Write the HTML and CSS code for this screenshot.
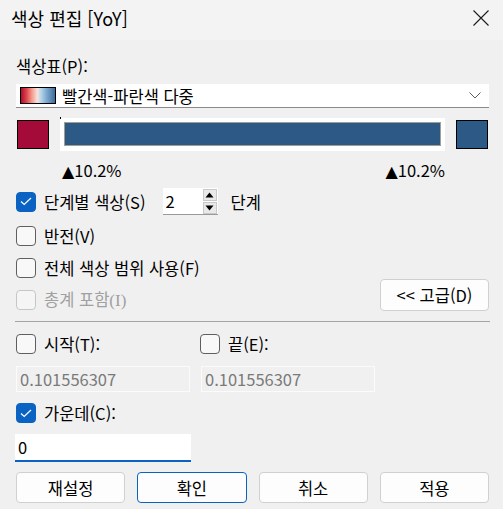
FILE: index.html
```html
<!DOCTYPE html>
<html lang="ko">
<head>
<meta charset="utf-8">
<link rel="stylesheet" href="styles.css">
</head>
<body>
<div class="titlebar">
  <span class="title">색상 편집 [YoY]</span>
  <svg class="close" width="16" height="16" viewBox="0 0 16 16"><path d="M0.5 0.5 L15.5 15.5 M15.5 0.5 L0.5 15.5" stroke="#1a1a1a" stroke-width="1.1" fill="none"/></svg>
</div>
<div class="content">
  <div class="label-row">색상표(P):</div>
  <div class="combo">
    <span class="swatch"></span>
    <span class="combo-text">빨간색-파란색 다중</span>
    <svg class="chev" width="12" height="7" viewBox="0 0 12 7"><path d="M0.5 0.5 L6 6 L11.5 0.5" stroke="#5c5c5c" stroke-width="1" fill="none"/></svg>
  </div>
  <div class="color-row">
    <span class="sq red"></span>
    <div class="bar-outer"><div class="bar-inner"></div></div>
    <span class="sq blue"></span>
  </div>
  <div class="pct-row"><span><span class="tri">▲</span>10.2%</span><span><span class="tri">▲</span>10.2%</span></div>
  <div class="steps-row">
    <span class="cb checked"><svg width="12" height="9" viewBox="0 0 12 9"><path d="M1 4.5 L4.2 7.5 L11 1" stroke="#fff" stroke-width="1.2" fill="none"/></svg></span>
    <span class="cb-label">단계별 색상(S)</span>
    <div class="spinner">
      <span class="spin-val">2</span>
      <div class="spin-btns">
        <span class="spin-btn"><svg width="9" height="6" viewBox="0 0 9 6"><path d="M4.5 0.5 L8.5 5.5 L0.5 5.5 Z" fill="#000"/></svg></span>
        <span class="spin-btn"><svg width="9" height="6" viewBox="0 0 9 6"><path d="M0.5 0.5 L8.5 0.5 L4.5 5.5 Z" fill="#000"/></svg></span>
      </div>
    </div>
    <span class="unit">단계</span>
  </div>
  <div class="check-row r-invert">
    <span class="cb"></span><span class="cb-label">반전(V)</span>
  </div>
  <div class="check-row r-full">
    <span class="cb"></span><span class="cb-label">전체 색상 범위 사용(F)</span>
  </div>
  <div class="adv-row">
    <div class="check-item disabled">
      <span class="cb"></span><span class="cb-label">총계 포함<span class="serif">(I)</span></span>
    </div>
    <button class="btn adv">&lt;&lt; 고급(D)</button>
  </div>
  <div class="sep"></div>
  <div class="pair-row">
    <div class="check-item"><span class="cb"></span><span class="cb-label">시작(T):</span></div>
    <div class="check-item"><span class="cb"></span><span class="cb-label">끝(E):</span></div>
  </div>
  <div class="pair-inputs">
    <div class="field disabled-field">0.101556307</div>
    <div class="field disabled-field">0.101556307</div>
  </div>
  <div class="check-row r-center">
    <span class="cb checked"><svg width="12" height="9" viewBox="0 0 12 9"><path d="M1 4.5 L4.2 7.5 L11 1" stroke="#fff" stroke-width="1.2" fill="none"/></svg></span>
    <span class="cb-label">가운데(C):</span>
  </div>
  <div class="field active-field">0</div>
  <div class="buttons">
    <button class="btn">재설정</button>
    <button class="btn default">확인</button>
    <button class="btn">취소</button>
    <button class="btn">적용</button>
  </div>
</div>
</body>
</html>
```
FILE: styles.css
```css
* { box-sizing: border-box; }
html, body { margin: 0; padding: 0; }
body {
  width: 503px;
  height: 509px;
  overflow: hidden;
  background: #f0f0f0;
  font-family: "Noto Sans CJK KR", sans-serif;
  font-size: 16.5px;
  color: #000;
}
.titlebar {
  height: 40px;
  background: #f3f3f3;
  display: flex;
  align-items: center;
  justify-content: space-between;
  padding: 0 14px 0 11px;
}
.title { font-size: 18px; line-height: 22px; margin-top: -4px; }
.close { display: block; margin-top: -4px; }
.content { padding: 0 14px 0 16px; }
.label-row { margin-top: 16px; height: 20px; line-height: 20px; }
.combo {
  margin-top: 8px;
  height: 24px;
  background: #fff;
  border-bottom: 1px solid #8a8a8a;
  display: flex;
  align-items: center;
  padding: 0 8px 0 4px;
}
.swatch {
  width: 36px;
  height: 17px;
  border: 1px solid #000;
  background: linear-gradient(to right, #a8102c 0%, #dd3d48 15%, #f49a8c 32%, #f6e3dc 48%, #bcd6ea 58%, #7eaad0 75%, #3c6c9c 100%);
}
.combo-text { margin-left: 6px; flex: 1; line-height: 20px; }
.chev { display: block; }
.color-row {
  margin-top: 10px;
  height: 33px;
  display: flex;
  align-items: center;
}
.sq { width: 32px; height: 29px; border: 1px solid #000; }
.red { margin-left: 1px; background: #a50b38; }
.blue { margin-left: 11px; background: #2d5986; }
.bar-outer {
  position: relative;
  margin-left: 11px;
  width: 385px;
  height: 33px;
  background: #fff;
  padding: 4px 4px 5px 4px;
}
.bar-outer::before {
  content: "";
  position: absolute;
  left: 0;
  top: -1px;
  width: 1px;
  height: 2px;
  background: #000;
}
.bar-inner { height: 100%; background: #2d5986; border: 1px solid #a29f92; }
.pct-row {
  margin-top: 9px;
  margin-left: 46px;
  width: 383px;
  height: 20px;
  line-height: 20px;
  display: flex;
  justify-content: space-between;
}
.tri { font-family: "DejaVu Sans", sans-serif; font-size: 16px; margin-right: 0; }
.steps-row {
  margin-top: 8px;
  height: 27px;
  display: flex;
  align-items: center;
}
.cb {
  width: 20px;
  height: 20px;
  flex: none;
  border: 1px solid #5f5f5f;
  border-radius: 4px;
  background: #f8f8f8;
  display: flex;
  align-items: center;
  justify-content: center;
}
.cb.checked { background: #0a62c2; border-color: #0a62c2; }
.cb svg { display: block; }
.cb-label { margin-left: 8px; line-height: 20px; white-space: nowrap; }
.spinner {
  margin-left: 17px;
  width: 55px;
  height: 27px;
  background: #fff;
  border-bottom: 1px solid #9a9a9a;
  display: flex;
  align-items: center;
  justify-content: space-between;
  padding: 0 1px 0 3px;
}
.spin-val { line-height: 20px; }
.spin-btns { display: flex; flex-direction: column; gap: 1px; }
.spin-btn {
  width: 14px;
  height: 12px;
  background: #e9e9e9;
  border: 1px solid #c9c9c9;
  display: flex;
  align-items: center;
  justify-content: center;
}
.spin-btn svg { display: block; }
.unit { margin-left: 13px; line-height: 20px; }
.check-row { display: flex; align-items: center; height: 20px; }
.r-invert { margin-top: 11px; }
.r-full { margin-top: 12px; }
.r-center { margin-top: 11px; }
.check-item { display: flex; align-items: center; height: 20px; }
.adv-row { margin-top: 1px; height: 32px; display: flex; }
.adv-row .check-item { margin-top: 11px; }
.disabled .cb { border-color: #c6c6c6; background: #f5f5f5; }
.disabled .cb-label { color: #a0a0a0; }
.serif { font-family: "Liberation Serif", serif; font-size: 17px; }
.btn {
  font-family: "Noto Sans CJK KR", sans-serif;
  font-size: 16.5px;
  color: #000;
  background: #fdfdfd;
  border: 1px solid #d0d0d0;
  border-radius: 4px;
  padding: 0;
  line-height: 20px;
}
.adv { margin-left: auto; width: 109px; height: 32px; }
.sep { margin: 10px -1px 0 -1px; height: 1px; background: #a3a3a3; }
.pair-row {
  margin-top: 12px;
  height: 20px;
  display: grid;
  grid-template-columns: 184px 1fr;
}
.pair-inputs {
  margin-top: 12px;
  display: grid;
  grid-template-columns: 185px 174px;
}
.field { height: 26px; line-height: 24px; padding-left: 3px; }
.disabled-field {
  width: 174px;
  background: #f0f0f0;
  border: 1px solid #fbfbfb;
  color: #7a7a7a;
}
.active-field {
  margin-top: 11px;
  margin-left: -1px;
  width: 176px;
  height: 28px;
  line-height: 26px;
  background: #fff;
  border-bottom: 2px solid #0a62c2;
  padding-left: 3px;
}
.buttons {
  margin-top: 10px;
  display: grid;
  grid-template-columns: repeat(4, 1fr);
  column-gap: 12px;
}
.buttons .btn { height: 31px; }
.btn.default { border-color: #0a62c2; }
```
